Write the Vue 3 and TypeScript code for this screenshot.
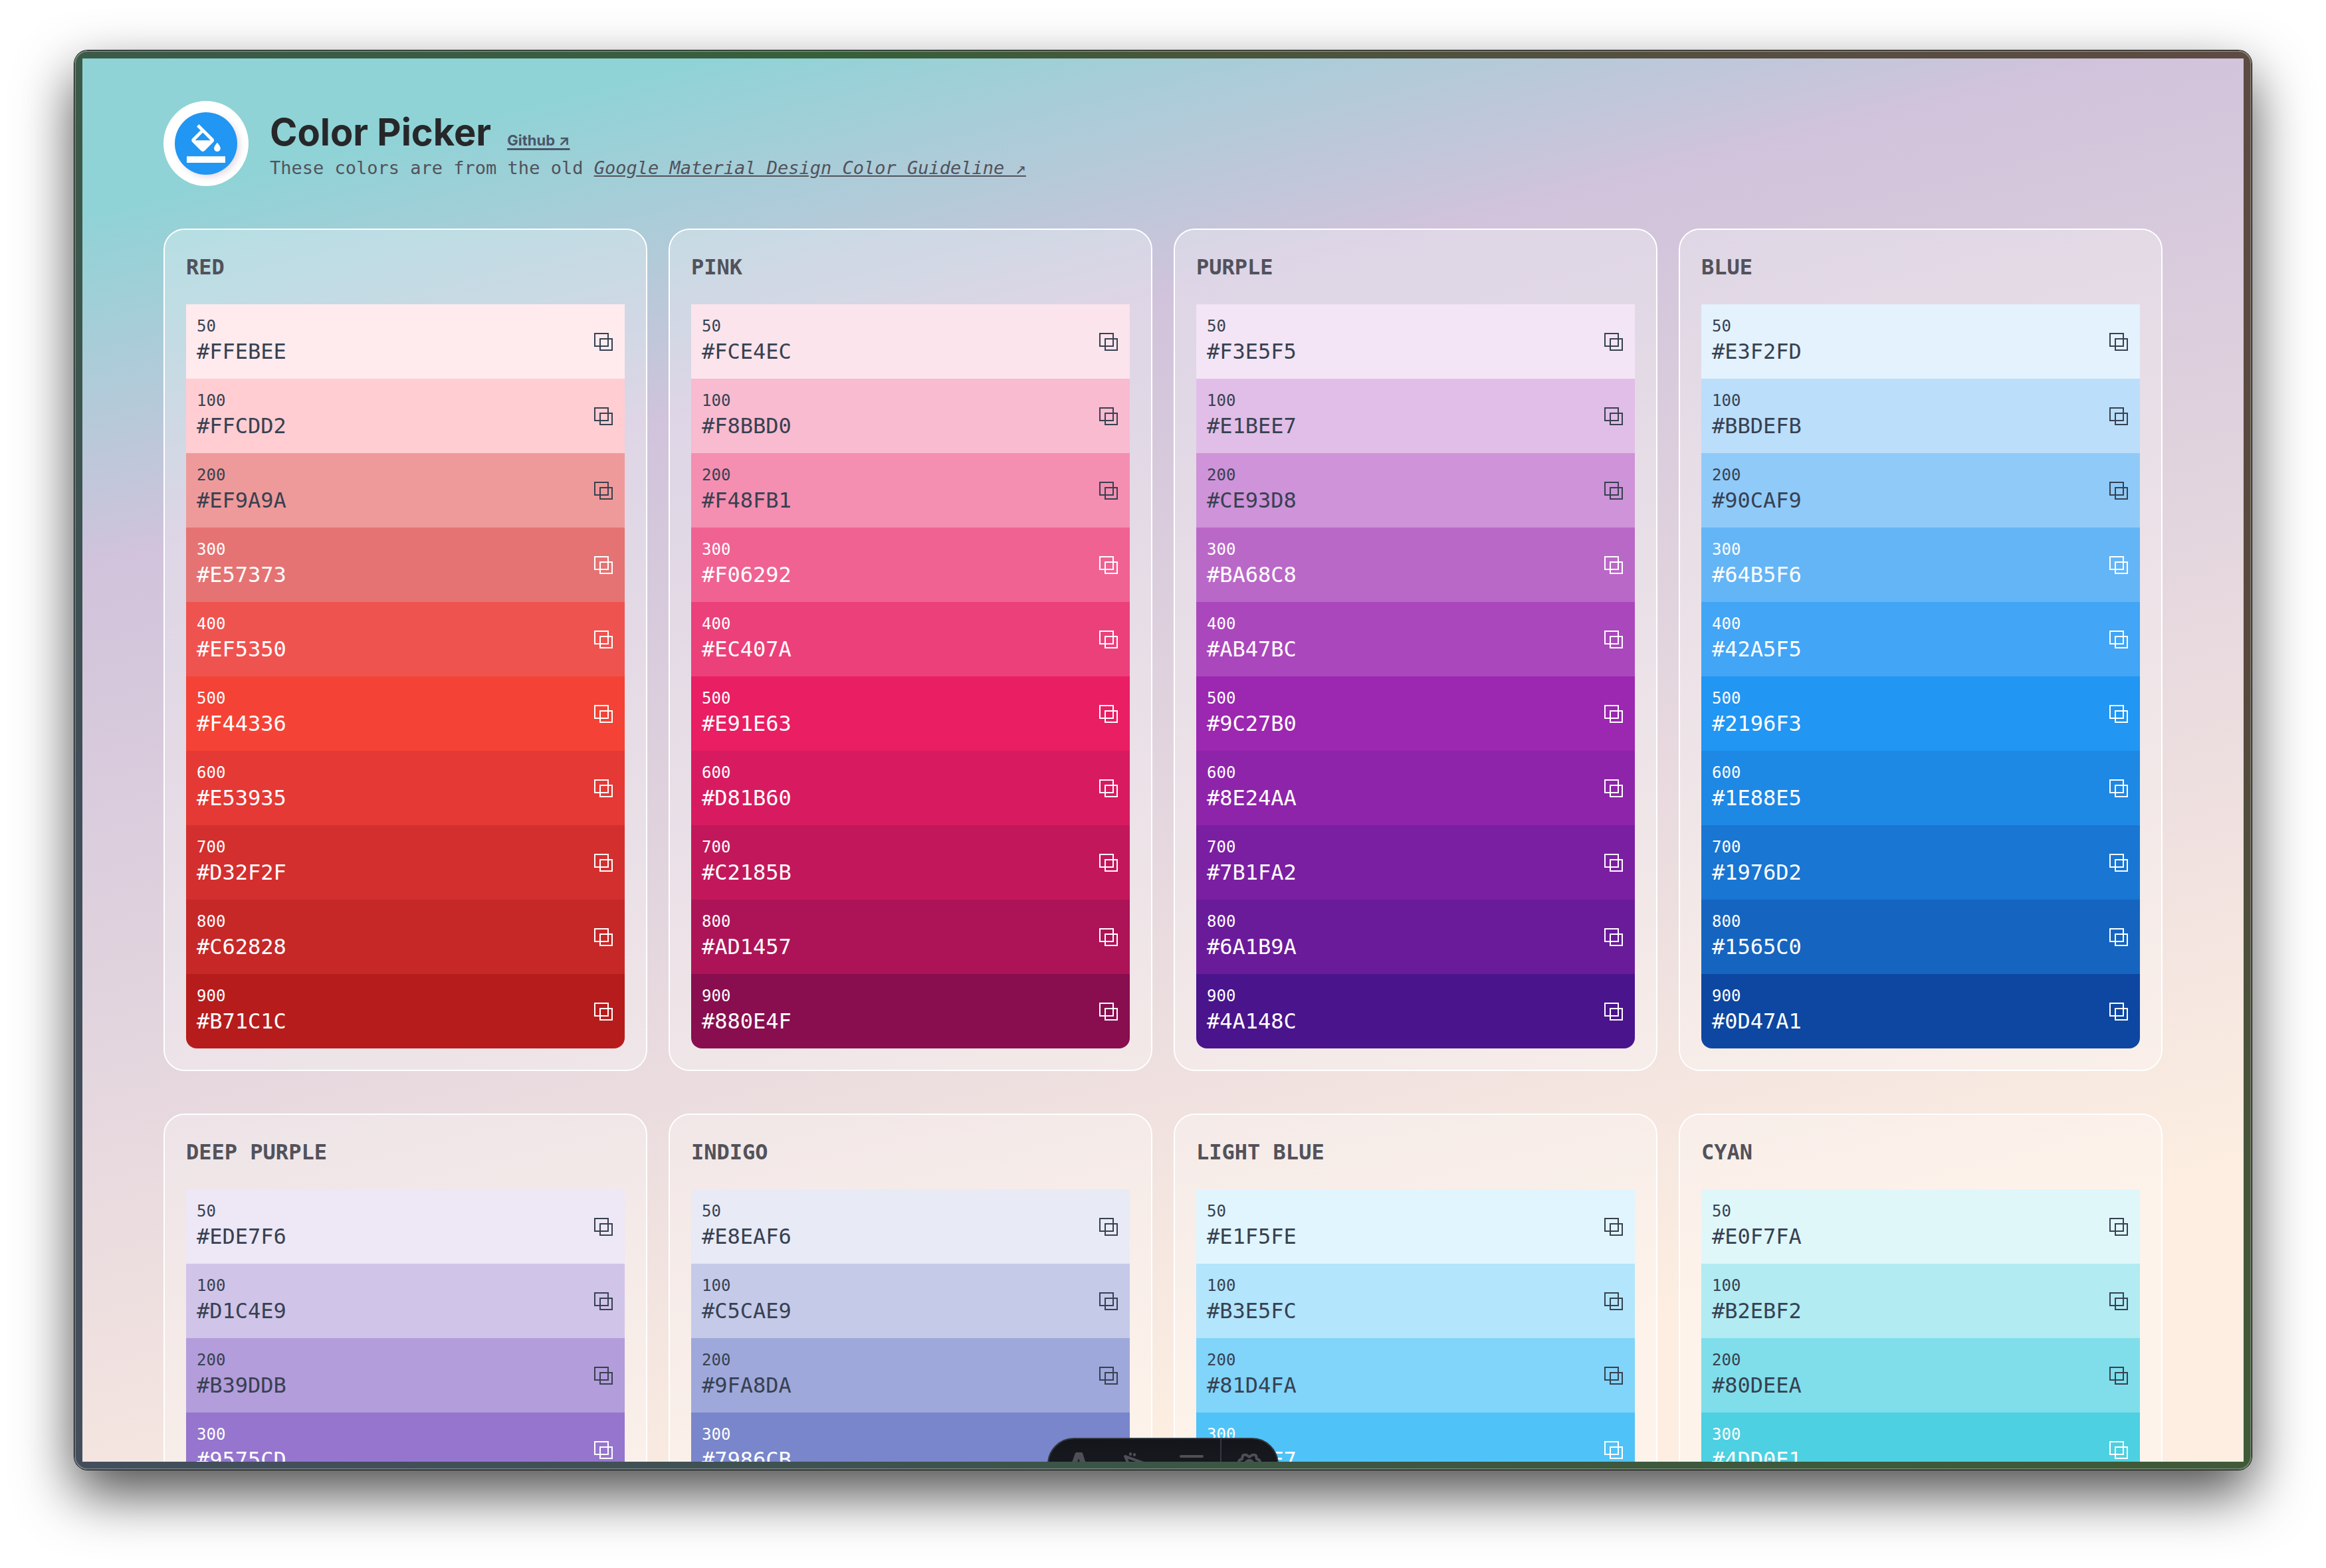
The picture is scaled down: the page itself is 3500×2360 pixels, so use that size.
<script setup lang="ts">
interface Palette {
  name: string
  colors: string[]
}

const shades: number[] = [50, 100, 200, 300, 400, 500, 600, 700, 800, 900]

const palettes: Palette[] = [
  { name: 'RED', colors: ['#FFEBEE', '#FFCDD2', '#EF9A9A', '#E57373', '#EF5350', '#F44336', '#E53935', '#D32F2F', '#C62828', '#B71C1C'] },
  { name: 'PINK', colors: ['#FCE4EC', '#F8BBD0', '#F48FB1', '#F06292', '#EC407A', '#E91E63', '#D81B60', '#C2185B', '#AD1457', '#880E4F'] },
  { name: 'PURPLE', colors: ['#F3E5F5', '#E1BEE7', '#CE93D8', '#BA68C8', '#AB47BC', '#9C27B0', '#8E24AA', '#7B1FA2', '#6A1B9A', '#4A148C'] },
  { name: 'BLUE', colors: ['#E3F2FD', '#BBDEFB', '#90CAF9', '#64B5F6', '#42A5F5', '#2196F3', '#1E88E5', '#1976D2', '#1565C0', '#0D47A1'] },
  { name: 'DEEP PURPLE', colors: ['#EDE7F6', '#D1C4E9', '#B39DDB', '#9575CD'] },
  { name: 'INDIGO', colors: ['#E8EAF6', '#C5CAE9', '#9FA8DA', '#7986CB'] },
  { name: 'LIGHT BLUE', colors: ['#E1F5FE', '#B3E5FC', '#81D4FA', '#4FC3F7'] },
  { name: 'CYAN', colors: ['#E0F7FA', '#B2EBF2', '#80DEEA', '#4DD0E1'] },
]

function copy(hex: string): void {
  navigator.clipboard?.writeText(hex)
}
</script>

<template>
  <div class="desktop">
    <div class="window">
      <div class="page">
        <header class="header">
          <div class="logo">
            <div class="logo-disc">
              <svg viewBox="0 0 24 24" fill="currentColor" aria-hidden="true">
                <path d="M16.56 8.94L7.62 0 6.21 1.41l2.38 2.38-5.15 5.15c-.59.59-.59 1.54 0 2.12l5.5 5.5c.29.29.68.44 1.06.44s.77-.15 1.06-.44l5.5-5.5c.59-.58.59-1.53 0-2.12zM5.21 10L10 5.21 14.79 10H5.21zM19 11.5s-2 2.17-2 3.5c0 1.1.9 2 2 2s2-.9 2-2c0-1.33-2-3.5-2-3.5zM0 20h24v4H0v-4z" />
              </svg>
            </div>
          </div>
          <div class="intro">
            <div class="title-row">
              <h1>Color Picker</h1>
              <a class="github" href="#github">Github ↗</a>
            </div>
            <p>These colors are from the old <a href="#guideline">Google Material Design Color Guideline ↗</a></p>
          </div>
        </header>

        <main class="grid">
          <section v-for="palette in palettes" :key="palette.name" class="card">
            <h2>{{ palette.name }}</h2>
            <ul class="swatches">
              <li
                v-for="(hex, i) in palette.colors"
                :key="hex"
                class="swatch"
                :class="{ dark: shades[i] >= 300 }"
                :style="{ backgroundColor: hex }"
              >
                <div class="label">
                  <div class="shade">{{ shades[i] }}</div>
                  <div class="hex">{{ hex }}</div>
                </div>
                <button type="button" class="copy" :aria-label="`Copy ${hex}`" @click="copy(hex)">
                  <svg viewBox="0 0 32 32" fill="none" stroke="currentColor" stroke-width="2" aria-hidden="true">
                    <rect x="3" y="4" width="20" height="19" />
                    <rect x="11" y="12" width="18" height="17" />
                  </svg>
                </button>
              </li>
            </ul>
          </section>
        </main>

        <div class="toolbar">
          <button type="button" aria-label="Menu">
            <svg viewBox="0 0 36 36" fill="currentColor" aria-hidden="true">
              <path d="M15 1q1-1 2-1h7q1 0 2 1l9 28q-5-2-9-2l-6-18-6 18q-5 0-9 2z" />
            </svg>
          </button>
          <button type="button" aria-label="Inspect">
            <svg viewBox="0 0 36 36" fill="none" stroke="currentColor" stroke-width="4" stroke-linejoin="round" stroke-linecap="round" aria-hidden="true">
              <path d="M4 6l28 10-11 5-5 11z" />
              <path d="M12 2v1M18 3v1" />
            </svg>
          </button>
          <button type="button" aria-label="Audit">
            <svg viewBox="0 0 36 36" fill="none" stroke="currentColor" stroke-width="4" stroke-linecap="round" aria-hidden="true">
              <path d="M2 6h32M2 18h32M2 30h32" />
            </svg>
          </button>
          <button type="button" class="settings" aria-label="Settings">
            <svg viewBox="0 0 36 36" fill="none" stroke="currentColor" stroke-width="4" stroke-linejoin="round" aria-hidden="true">
              <path d="M2 15q0-4 5-5l1-5q1-2 6-1l4 3 4-3q5-1 6 1l1 5q5 1 5 5l-2 3 2 3q0 4-5 5l-1 5q-1 2-6 1l-4-3-4 3q-5 1-6-1l-1-5q-5-1-5-5l2-3z" />
              <circle cx="18" cy="18" r="6" />
            </svg>
          </button>
        </div>
      </div>
    </div>
  </div>
</template>

<style>
body {
  margin: 0;
  background: #fff;
}
</style>

<style scoped>
* {
  box-sizing: border-box;
}

.desktop {
  display: flex;
  height: 100vh;
  padding: 76px 112px 148px;
  font-family: "DejaVu Sans Mono", monospace;
}

.window {
  display: flex;
  flex: 1;
  min-width: 0;
  padding: 12px;
  border-radius: 20px;
  background: conic-gradient(#47563b, #5c4b42 57deg, #57493e 85deg, #3f5a38 123deg, #3c5546 180deg, #434e5c 237deg, #3f4e58 270deg, #3b5a48 303deg, #36603a 335deg, #47563b);
  box-shadow:
    inset 0 0 0 2px rgba(255, 255, 255, 0.25),
    0 0 0 1px #000,
    0 36px 84px rgba(0, 0, 0, 0.7);
}

.page {
  position: relative;
  flex: 1;
  min-width: 0;
  overflow: hidden;
  padding: 64px 122px;
  background: linear-gradient(166deg, #8fd3d6 8%, #d0c3db 26%, #fdeee1 85%);
}

.header {
  display: flex;
  align-items: center;
  gap: 32px;
  margin-bottom: 64px;
}

.logo {
  display: grid;
  place-items: center;
  width: 128px;
  height: 128px;
  border-radius: 50%;
  background: #fff;
}

.logo-disc {
  display: grid;
  place-items: center;
  width: 94px;
  height: 94px;
  border-radius: 50%;
  background: #2196f3;
  box-shadow: 4px 4px 8px rgba(190, 170, 190, 0.4);
  color: #fff;
}

.logo-disc svg {
  width: 58px;
  height: 58px;
}

.intro {
  padding-top: 6px;
}

.title-row {
  display: flex;
  align-items: baseline;
  gap: 24px;
  font-family: Inter, sans-serif;
}

h1 {
  margin: 0;
  font-size: 56px;
  font-weight: 700;
  line-height: 68px;
  color: #27272a;
}

.github {
  font-size: 22px;
  font-weight: 700;
  color: #4b5568;
  text-decoration-thickness: 3px;
  text-underline-offset: 4px;
}

p {
  margin: 0;
  font-size: 27px;
  line-height: 40px;
  color: #52525b;
}

p a {
  color: inherit;
  font-style: italic;
}

.grid {
  display: grid;
  grid-template-columns: repeat(4, minmax(0, 1fr));
  gap: 64px 32px;
}

.card {
  padding: 32px;
  border: 2px solid #fff;
  border-radius: 32px;
  background: rgba(255, 255, 255, 0.3);
  background-clip: padding-box;
}

h2 {
  margin: 0 0 32px;
  font-size: 32px;
  line-height: 48px;
  color: #52525b;
}

.swatches {
  margin: 0;
  padding: 0;
  overflow: hidden;
  border-radius: 0 0 16px 16px;
  list-style: none;
}

.swatch {
  display: flex;
  align-items: center;
  justify-content: space-between;
  height: 112px;
  padding: 0 16px;
  color: #374151;
}

.swatch.dark {
  color: #fff;
}

.label {
  padding-bottom: 6px;
}

.shade {
  font-size: 24px;
  line-height: 36px;
}

.hex {
  font-size: 32px;
  line-height: 40px;
}

.copy {
  display: flex;
  padding: 0;
  border: 0;
  background: none;
  color: inherit;
  cursor: pointer;
}

.copy svg {
  width: 32px;
  height: 32px;
}

.toolbar {
  position: absolute;
  bottom: -44px;
  left: 50%;
  display: flex;
  height: 80px;
  overflow: hidden;
  border: 2px solid #343841;
  border-radius: 40px;
  background: linear-gradient(#13151a, #1b1e24);
  transform: translateX(-50%);
}

.toolbar button {
  display: grid;
  place-items: center;
  width: 86px;
  padding: 0;
  border: 0;
  background: none;
  color: #4e5056;
}

.toolbar .settings {
  border-left: 2px solid #343841;
}

.toolbar svg {
  width: 36px;
  height: 36px;
}
</style>
